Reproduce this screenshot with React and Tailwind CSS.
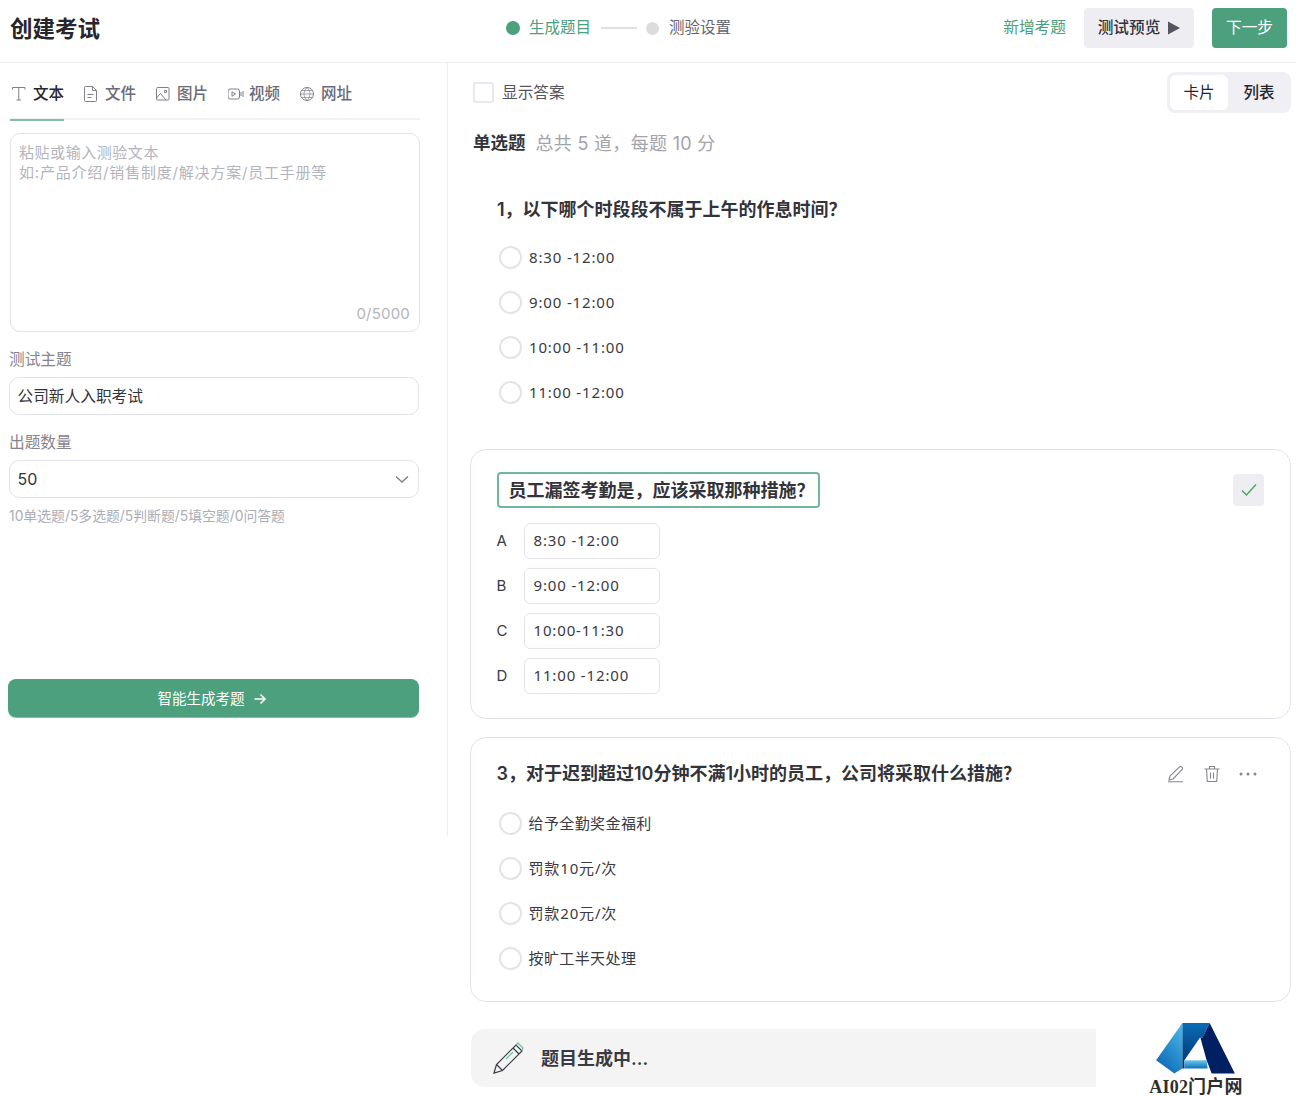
import React from "react";

const Radio = ({ label, cjk }) => (
  <div className="flex items-center h-[45px]">
    <span className="w-[23px] h-[23px] rounded-full border-2 border-[#e3e3e8] ml-[28px] shrink-0" />
    <span className={`ml-[7px] text-[15px] text-[#3a3a42] font-['Noto_Sans','Noto_Sans_CJK_SC',sans-serif] ${cjk ? "tracking-[0.4px]" : "tracking-[0.85px]"}`}>{label}</span>
  </div>
);

const Opt = ({ k, v }) => (
  <div className="flex items-center h-[45px]">
    <span className="w-[27px] text-[15px] text-[#3a3a42]">{k}</span>
    <div className="w-[136px] h-[36px] border-[1.5px] border-[#e4e4ec] rounded-md flex items-center pl-[9px] pb-[2px] text-[15px] tracking-[0.85px] text-[#3a3a42] font-['Noto_Sans','Noto_Sans_CJK_SC',sans-serif]">{v}</div>
  </div>
);

const TabIcon = ({ children }) => (
  <svg width="16" height="16" viewBox="0 0 16 16" fill="none" stroke="#7f7f8e" strokeWidth="1" className="mr-[5px] shrink-0">{children}</svg>
);

function Tabs() {
  const items = [
    ["文本", <TabIcon key="t"><path d="M0.500 3.500V1.500h12.500v2M6.750 1.500v12.500M4.500 14h4.500" /></TabIcon>],
    ["文件", <TabIcon key="f"><path d="M1.500 0.500h7l4 4v10a1 1 0 0 1-1 1h-10a1 1 0 0 1-1-1v-13a1 1 0 0 1 1-1zM8.500 0.500v4h4M3.500 8.500h6M3.500 11.500h4" /></TabIcon>],
    ["图片", <TabIcon key="i"><rect x="0.500" y="1.500" width="12.500" height="12.500" rx="1" /><path d="M0.500 12l4-4.500 5.500 6.500M8.500 4.500h2v2h-2z" /></TabIcon>],
    ["视频", <TabIcon key="v"><rect x="0" y="3" width="11.500" height="10" rx="2" /><path d="M4 5.800l3.500 2.200L4 10.200zM13 6v4M15 5v6" /></TabIcon>],
    ["网址", <TabIcon key="w"><circle cx="7" cy="8" r="6.500" /><path d="M0.500 8h13M1.500 4.500h11M1.500 11.500h11M7 1.500c-4 4-4 9 0 13M7 1.500c4 4 4 9 0 13" strokeWidth="0.7" /></TabIcon>],
  ];
  return (
    <div className="ml-[10px] w-[410px] h-[57px] border-b-2 border-[#f2f2f4] flex items-center pt-[4px]">
      {items.map(([label, icon], i) => (
        <div key={label} className={`flex items-center h-[55px] pl-[2px] pt-[2px] w-[54px] mr-[18px] text-[15.5px] font-medium ${i === 0 ? "text-[#26262c] border-b-2 border-[#7fc0a6] -mb-[2px]" : "text-[#6b6b78]"}`}>
          {icon}
          <span className="whitespace-nowrap">{label}</span>
        </div>
      ))}
    </div>
  );
}

function Aside() {
  return (
    <aside className="w-[448px] h-[773px] border-r border-[#eeeef2] shrink-0">
      <Tabs />
      <div className="relative ml-[10px] mt-[13px] w-[410px] h-[199px] border-[1.5px] border-[#e2e2ea] rounded-[10px] pt-[9px] pl-[8px] text-[15px] leading-[20px] text-[#b4b4bc]">
        <div className="tracking-[0.55px]">粘贴或输入测验文本</div>
        <div className="tracking-[0.8px]">如:产品介绍/销售制度/解决方案/员工手册等</div>
        <div className="absolute right-[9px] bottom-[7px] text-[15px] tracking-[0.2px] text-[#b4b4bc] leading-[20px]">0/5000</div>
      </div>
      <div className="ml-[9px] mt-[18px] text-[15.700px] leading-[20px] text-[#85858f]">测试主题</div>
      <div className="ml-[9px] mt-[7px] w-[410px] h-[38px] border-[1.5px] border-[#e2e2ea] rounded-[10px] flex items-center pl-[7.500px] pt-[1px] text-[15.700px] text-[#33333a]">公司新人入职考试</div>
      <div className="ml-[9px] mt-[18px] text-[15.700px] leading-[20px] text-[#85858f]">出题数量</div>
      <div className="ml-[9px] mt-[7px] w-[410px] h-[38px] border-[1.5px] border-[#e2e2ea] rounded-[10px] flex items-center justify-between pl-[7.500px] pr-[8px] text-[16px] text-[#33333a]">
        50
        <svg width="16" height="16" viewBox="0 0 16 16" fill="none" stroke="#7d7d88" strokeWidth="1.300"><path d="M2 5.500L8 11l6-5.500" /></svg>
      </div>
      <div className="ml-[9px] mt-[9px] text-[13.850px] leading-[18px] text-[#adadb6] whitespace-nowrap">10单选题/5多选题/5判断题/5填空题/0问答题</div>
      <button className="ml-[8px] mt-[154px] w-[411px] h-[38px] rounded-lg bg-[#4ca07e] text-white text-[14.500px] flex items-center justify-center gap-[8px] pr-[3px] pt-[1px] shadow-[0_1px_0_#7fc0a6]">
        智能生成考题
        <svg width="14" height="14" viewBox="0 0 14 14" fill="none" stroke="#fff" strokeWidth="1.600"><path d="M1.500 7h10.500M7.500 2.500L12 7l-4.500 4.500" /></svg>
      </button>
    </aside>
  );
}

function Header() {
  return (
    <header className="relative h-[63px] border-b border-[#eeeef2] flex items-center pb-[6px]">
      <h1 className="ml-[10px] mt-[2px] w-[496px] text-[22.500px] font-bold text-[#26262c]">创建考试</h1>
      <div className="flex items-center text-[15.500px]">
        <span className="w-[14px] h-[14px] rounded-full bg-[#4ca07e]" />
        <span className="ml-[9px] text-[#4ca07e]">生成题目</span>
        <span className="ml-[10px] w-[36px] h-[2px] bg-[#e0e0e0]" />
        <span className="w-[13px] h-[13px] rounded-full bg-[#dcdcdc] ml-[9px]" />
        <span className="ml-[10px] text-[#64646e]">测验设置</span>
      </div>
      <div className="ml-auto mr-[9px] flex items-center text-[15.700px]">
        <span className="text-[#4ca07e] mr-[18px]">新增考题</span>
        <div className="w-[110px] h-[40px] rounded bg-[#eeeef2] flex items-center justify-center gap-[8px] text-[#33333a] mr-[18px] font-medium">
          测试预览
          <svg width="12" height="14" viewBox="0 0 12 14"><path d="M0 0.500L12 7L0 13.500z" fill="#55555e" /></svg>
        </div>
        <div className="w-[75px] h-[40px] rounded bg-[#4ca07e] text-white flex items-center justify-center">下一步</div>
      </div>
    </header>
  );
}

function Main() {
  return (
    <main className="flex-1 min-w-0 pl-[23px] pr-[5px]">
      <div className="flex items-center justify-between h-[59px] pt-[1px]">
        <div className="flex items-center ml-[2px] text-[15.700px] text-[#55555e]">
          <span className="w-[21px] h-[21px] rounded-[3px] border-2 border-[#e8e8ee] mr-[8px]" />
          显示答案
        </div>
        <div className="w-[124px] h-[41px] rounded-lg bg-[#f0f0f4] p-[3px] flex items-center text-[15.500px] text-[#26262c] -mt-[1px]">
          <div className="w-[58px] h-[35px] rounded-md bg-white flex items-center justify-center">卡片</div>
          <div className="flex-1 text-center font-medium pl-[2px]">列表</div>
        </div>
      </div>
      <div className="mt-[10px] ml-[2px] flex items-center h-[22px]">
        <span className="font-bold text-[17.500px] text-[#33333a] mr-[10px]">单选题</span>
        <span className="text-[18px] text-[#a3a3ab] tracking-[0.3px] mt-[1px]">总共 5 道，每题 10 分</span>
      </div>
      <div className="mt-[44px] ml-[26px] text-[18px] font-semibold leading-[24px] text-[#33333a]">1，以下哪个时段段不属于上午的作息时间？</div>
      <div className="mt-[13px]">
        <Radio label="8:30 -12:00" />
        <Radio label="9:00 -12:00" />
        <Radio label="10:00 -11:00" />
        <Radio label="11:00 -12:00" />
      </div>
      <section className="relative -ml-px mt-[34px] h-[270px] w-[821px] border-[1.5px] border-[#e2e2ea] rounded-[16px] pl-[25.500px] pt-[21.500px]">
        <div className="inline-flex items-center h-[36px] pl-[10px] pr-[3px] pt-[1px] border-2 border-[#6fb89c] rounded text-[18px] font-semibold text-[#33333a]">员工漏签考勤是，应该采取那种措施？</div>
        <div className="mt-[11px]">
          <Opt k="A" v="8:30 -12:00" />
          <Opt k="B" v="9:00 -12:00" />
          <Opt k="C" v="10:00-11:30" />
          <Opt k="D" v="11:00 -12:00" />
        </div>
        <div className="absolute right-[26px] top-[24px] w-[31px] h-[32px] rounded bg-[#eeeef2] flex items-center justify-center">
          <svg width="16" height="14" viewBox="0 0 16 14" fill="none" stroke="#4ca65f" strokeWidth="1.500"><path d="M1 7.500l4.500 4.500L15 1.500" /></svg>
        </div>
      </section>
      <section className="relative -ml-px mt-[18px] h-[265px] w-[821px] border-[1.5px] border-[#e2e2ea] rounded-[16px] pl-[25.500px] pt-[23.500px]">
        <div className="text-[18px] font-semibold leading-[24px] text-[#33333a]">3，对于迟到超过10分钟不满1小时的员工，公司将采取什么措施？</div>
        <div className="mt-[15px] -ml-[26px]">
          <Radio cjk label="给予全勤奖金福利" />
          <Radio label="罚款10元/次" />
          <Radio label="罚款20元/次" />
          <Radio cjk label="按旷工半天处理" />
        </div>
        <div className="absolute right-[33px] top-[27px] flex items-center gap-[18px]">
          <svg width="18" height="18" viewBox="0 0 18 18" fill="none" stroke="#85858f" strokeWidth="1.100"><path d="M2 15l1-4L12.500 1.800a1.500 1.500 0 0 1 2 0l.7.7a1.500 1.500 0 0 1 0 2L6 14zM1 16.800h15" /></svg>
          <svg width="18" height="18" viewBox="0 0 18 18" fill="none" stroke="#85858f" strokeWidth="1.100"><path d="M1.500 4h15M6.500 4V1.500h5V4M3.500 4l.8 12.500h9.400l.8-12.500M7.500 7.500v6M10.500 7.500v6" /></svg>
          <svg width="18" height="4" viewBox="0 0 18 4" fill="#85858f"><circle cx="2" cy="2" r="1.500" /><circle cx="9" cy="2" r="1.500" /><circle cx="16" cy="2" r="1.500" /></svg>
        </div>
      </section>
      <div className="mt-[27px] w-[821px] h-[58px] rounded-[14px] bg-[#f4f4f5] flex items-center pl-[21px] text-[18px] font-semibold text-[#3a3a42]">
        <svg width="32" height="32" viewBox="0 0 32 32" fill="none" stroke="#3a3a48" strokeWidth="1.200" className="mr-[17px]">
          <path d="M2 31l2.500-8.500L24 3l6 6-19.500 19.500zM4.500 22.500l6 6M21 6l6 6" />
          <path d="M24 3l2-2 5 5-1.500 2.500M14 17l7-7" stroke="#5fc09c" />
        </svg>
        题目生成中...
      </div>
    </main>
  );
}

function Watermark() {
  return (
    <div className="absolute left-[1096px] top-[1015px] w-[200px] h-[81px] bg-white flex flex-col items-center">
      <svg width="80" height="52" viewBox="0 0 79 51.500" className="mt-[8px] shrink-0">
        <defs>
          <linearGradient id="a" x1="0.800" y1="0" x2="0.200" y2="1"><stop offset="0" stopColor="#47b4e6" /><stop offset="1" stopColor="#0a66b4" /></linearGradient>
          <linearGradient id="b" x1="0" y1="0" x2="0" y2="1"><stop offset="0" stopColor="#0a6cb6" /><stop offset="1" stopColor="#01306f" /></linearGradient>
          <linearGradient id="c" x1="0" y1="0" x2="0" y2="1"><stop offset="0" stopColor="#6ec6ea" /><stop offset="1" stopColor="#0b72bb" /></linearGradient>
        </defs>
        <path d="M26 0L0 37l18 13 8-5z" fill="url(#a)" />
        <path d="M26 0h27L46 14l-3 1-15 22v8h-2z" fill="url(#b)" />
        <path d="M53 0l25 50H55L50 37 44 15l2-1z" fill="#011f63" />
        <path d="M28 37h22l1 8H28z" fill="url(#c)" />
      </svg>
      <div className="mt-[3px] shrink-0 text-[18px] leading-[18px] font-semibold tracking-[0.2px] text-[#2f2f2f] font-['Liberation_Serif','Noto_Sans_CJK_SC',serif]">AI02门户网</div>
    </div>
  );
}

export default function App() {
  return (
    <div className="relative w-[1296px] h-[1096px] overflow-hidden bg-white font-['Inter','Noto_Sans_CJK_SC',sans-serif]">
      <Header />
      <div className="flex">
        <Aside />
        <Main />
      </div>
      <Watermark />
    </div>
  );
}
